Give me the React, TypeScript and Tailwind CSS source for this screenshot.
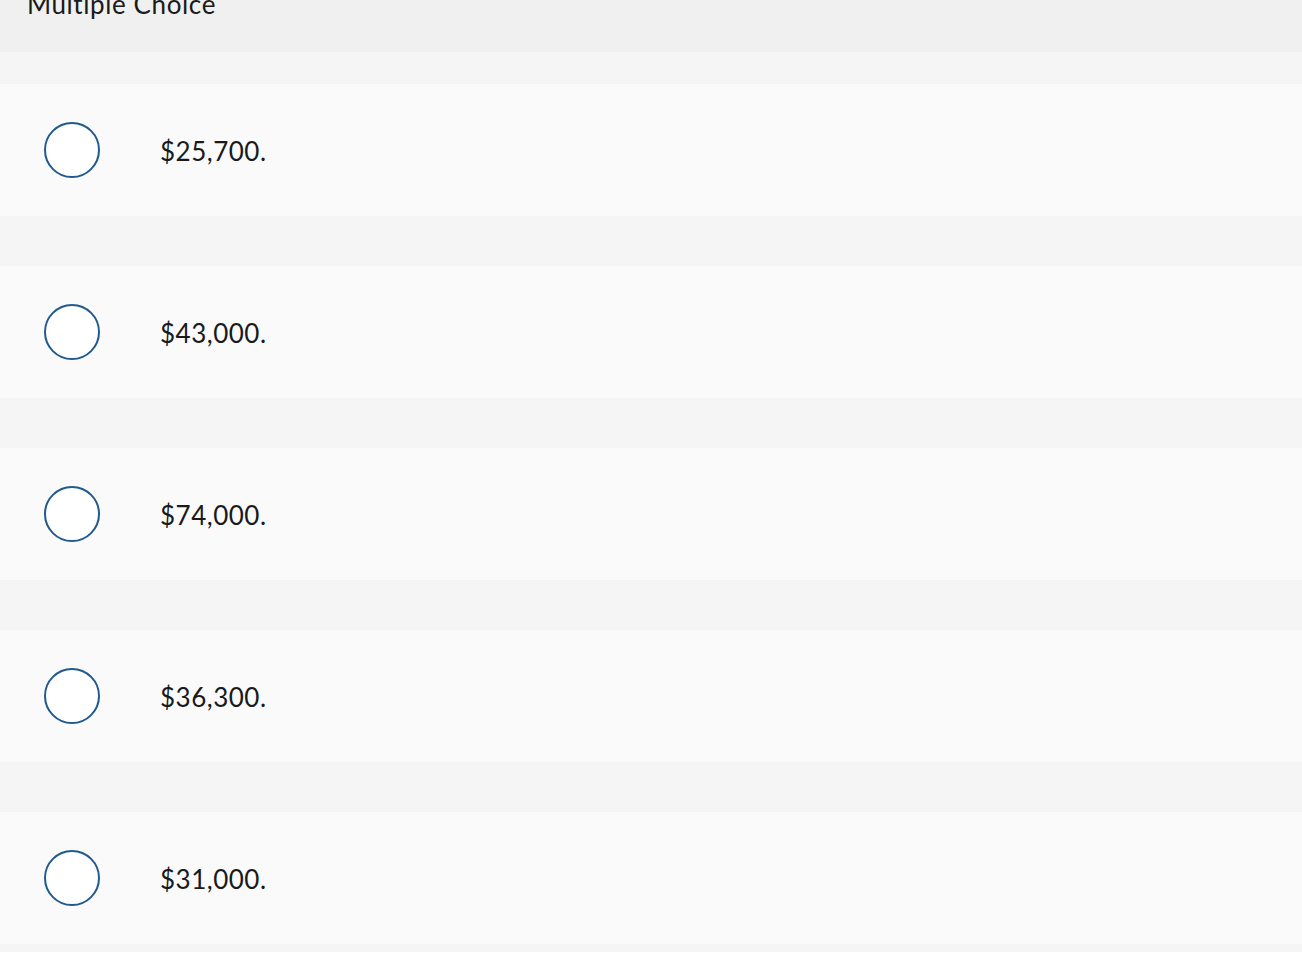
const choices = ["$25,700.", "$43,000.", "$74,000.", "$36,300.", "$31,000."];

export default function App() {
  return (
    <div className="w-[1302px] h-[958px] overflow-hidden bg-white font-['Lato','Open_Sans',sans-serif] text-[#1a1a1a]">
      <div className="h-[52px] bg-[#f0f0f0] overflow-hidden">
        <h2 className="mt-[-11px] pl-[27px] text-[26px] leading-[30px] tracking-[0.6px] font-normal">Multiple Choice</h2>
      </div>
      <div className="bg-[#f5f5f5] pt-[32px] pb-[8px] flex flex-col gap-[50px]">
        {choices.map(c => (
          <label key={c} className="h-[132px] bg-[#fafafa] flex items-center">
            <span className="ml-[44px] w-[56px] h-[56px] rounded-full border-2 border-[#215a8e] bg-white shrink-0" />
            <span className="ml-[60px] mt-[2px] text-[26px] leading-none tracking-[0.5px]">{c}</span>
          </label>
        ))}
      </div>
    </div>
  );
}
